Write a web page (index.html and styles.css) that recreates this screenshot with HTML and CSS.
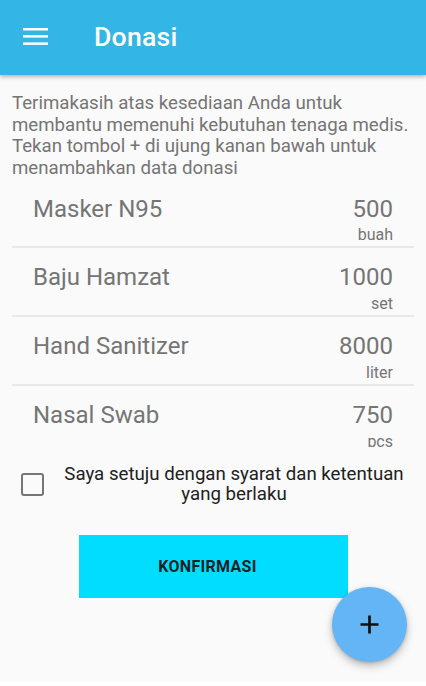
FILE: index.html
```html
<!DOCTYPE html>
<html lang="id">
<head>
<meta charset="utf-8">
<title>Donasi</title>
<link rel="stylesheet" href="styles.css">
</head>
<body>
<div class="screen">
  <header class="appbar">
    <svg class="menu-icon" width="25" height="17" viewBox="0 0 25 17" aria-hidden="true">
      <rect x="0" y="0" width="25" height="2.5" fill="#fff"/>
      <rect x="0" y="7.1" width="25" height="2.5" fill="#fff"/>
      <rect x="0" y="14.4" width="25" height="2.5" fill="#fff"/>
    </svg>
    <h1 class="title">Donasi</h1>
  </header>

  <p class="intro">Terimakasih atas kesediaan Anda untuk<br>membantu memenuhi kebutuhan tenaga medis.<br>Tekan tombol + di ujung kanan bawah untuk<br>menambahkan data donasi</p>

  <div class="list">
    <div class="item">
      <div class="row"><span class="name">Masker N95</span><span class="qty">500</span></div>
      <div class="unit">buah</div>
    </div>
    <div class="item">
      <div class="row"><span class="name">Baju Hamzat</span><span class="qty">1000</span></div>
      <div class="unit">set</div>
    </div>
    <div class="item">
      <div class="row"><span class="name">Hand Sanitizer</span><span class="qty">8000</span></div>
      <div class="unit">liter</div>
    </div>
    <div class="item">
      <div class="row"><span class="name">Nasal Swab</span><span class="qty">750</span></div>
      <div class="unit">pcs</div>
    </div>
  </div>

  <label class="agree">
    <span class="checkbox"></span>
    <span class="agree-text">Saya setuju dengan syarat dan ketentuan yang berlaku</span>
  </label>

  <button class="confirm" type="button">KONFIRMASI</button>

  <button class="fab" type="button" aria-label="Tambah">
    <svg width="19" height="19" viewBox="0 0 19 19" aria-hidden="true">
      <path d="M9.5 0.5V18.5M0.5 9.5H18.5" stroke="#111" stroke-width="2.7" fill="none"/>
    </svg>
  </button>
</div>
</body>
</html>
```

FILE: styles.css
```css
* {
  box-sizing: border-box;
}

html, body {
  margin: 0;
  padding: 0;
  background: #ffffff;
}

body {
  font-family: Roboto, "Noto Sans", "Liberation Sans", sans-serif;
}

.screen {
  position: relative;
  height: 681px;
  background: #fafafa;
  overflow: hidden;
}

.appbar {
  height: 75px;
  background: #33b5e5;
  display: flex;
  align-items: flex-start;
  box-shadow: 0 2px 4px rgba(0, 0, 0, 0.28);
  position: relative;
  z-index: 1;
}

.menu-icon {
  display: block;
  margin-top: 28px;
  margin-left: 23px;
  flex: none;
}

.title {
  margin: 0 0 0 46px;
  font-size: 26.67px;
  font-weight: 500;
  color: #ffffff;
  line-height: 75px;
  letter-spacing: 0.2px;
}

.intro {
  margin: 0;
  padding: 18px 12px 0;
  font-size: 18.67px;
  line-height: 21.5px;
  color: #757575;
}

.list {
  height: 268px;
  overflow: hidden;
}

.item {
  margin: 0 12px;
  padding: 15.5px 21px 1.65px;
  border-bottom: 2px solid #e8e8e8;
}

.row {
  display: flex;
  justify-content: space-between;
  align-items: baseline;
  font-size: 24px;
  line-height: 28.1px;
  color: #757575;
}

.unit {
  margin-top: 3px;
  text-align: right;
  font-size: 16px;
  line-height: 18.75px;
  color: #757575;
}

.agree {
  display: flex;
  align-items: center;
  margin-top: 17px;
}

.checkbox {
  flex: none;
  width: 23px;
  height: 23px;
  margin-left: 21px;
  border: 2.5px solid #757575;
  border-radius: 3px;
}

.agree-text {
  flex: 1;
  margin: 0 10px 0 8px;
  text-align: center;
  font-size: 18.67px;
  line-height: 20px;
  color: #212121;
}

.confirm {
  display: block;
  width: 269px;
  height: 63px;
  margin: 31px auto 0;
  padding: 0 11px 0 0;
  border: none;
  border-radius: 0;
  background: #00ddff;
  font-family: Roboto, "Noto Sans", "Liberation Sans", sans-serif;
  font-size: 16px;
  font-weight: 700;
  color: #1a2226;
  letter-spacing: 0.3px;
}

.fab {
  position: absolute;
  right: 19px;
  bottom: 19px;
  width: 75px;
  height: 75px;
  padding: 0;
  border: none;
  border-radius: 50%;
  background: #64b5f6;
  box-shadow: 0 4px 8px rgba(0, 0, 0, 0.25), 0 1px 3px rgba(0, 0, 0, 0.15);
  display: flex;
  align-items: center;
  justify-content: center;
}

.fab svg {
  display: block;
}
```
